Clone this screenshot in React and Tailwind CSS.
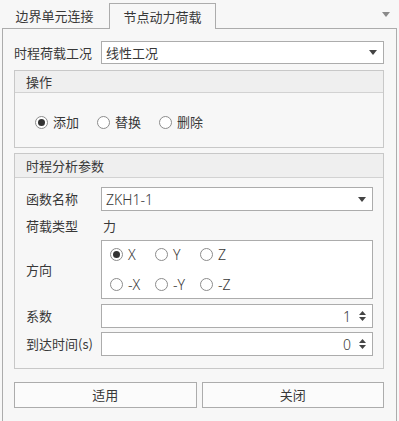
import React, { useState } from "react";

const font = { fontFamily: '"Noto Sans CJK SC", "Noto Sans", sans-serif' };
const latin = { fontFamily: '"Noto Sans", "Noto Sans CJK SC", sans-serif' };

function Caret({ color = "#444", className = "" }) {
  return (
    <svg width="8" height="5" viewBox="0 0 8 5" className={className}>
      <path d="M0 0 H8 L4 5 Z" fill={color} />
    </svg>
  );
}

function Radio({ checked, label, onClick, className = "", labelStyle }) {
  return (
    <button type="button" onClick={onClick} className={"flex items-center gap-[5px] " + className}>
      <span className="flex items-center justify-center w-[13px] h-[13px] rounded-full border border-[#8c8c8c] bg-white">
        {checked && <span className="w-[7px] h-[7px] rounded-full bg-[#333]" />}
      </span>
      <span style={labelStyle}>{label}</span>
    </button>
  );
}

function Spin({ value }) {
  return (
    <div className="flex-1 h-[24px] border border-[#acacac] bg-white flex items-center justify-end pr-[6px]">
      <span style={latin} className="mr-[8px] text-[14px] font-light">{value}</span>
      <div className="flex flex-col gap-[2px]">
        <svg width="7" height="4" viewBox="0 0 7 4"><path d="M0 4 H7 L3.5 0 Z" fill="#444" /></svg>
        <svg width="7" height="4" viewBox="0 0 7 4"><path d="M0 0 H7 L3.5 4 Z" fill="#444" /></svg>
      </div>
    </div>
  );
}

export default function App() {
  const [op, setOp] = useState("add");
  const [dir, setDir] = useState("X");

  return (
    <div style={font} className="w-[399px] h-[421px] bg-[#f7f7f7] text-[13px] text-[#383838] overflow-hidden">
      {/* 标签栏 */}
      <div className="flex items-end h-[28px]">
        <div className="w-[109px] h-[25px] flex items-center justify-center">边界单元连接</div>
        <div className="w-[107px] h-[26px] border border-b-0 border-[#acacac] bg-[#f7f7f7] flex items-center justify-center -mb-px relative z-10">
          节点动力荷载
        </div>
        <div className="flex-1 h-[28px] flex items-center justify-end pr-[9px]">
          <Caret color="#8a8a8a" />
        </div>
      </div>

      {/* 面板 */}
      <div className="ml-[2px] w-[395px] h-[393px] border border-b-0 border-[#acacac] pt-[12px] pl-[11px] pr-[12px]">
        <div className="flex items-center h-[23px]">
          <div className="w-[87px] whitespace-nowrap">时程荷载工况</div>
          <div className="flex-1 h-[23px] border border-[#acacac] bg-white flex items-center justify-between pl-[4px] pr-[6px]">
            <span>线性工况</span>
            <Caret />
          </div>
        </div>

        {/* 操作 */}
        <div className="mt-[6px] border border-[#c8c8c8] h-[78px]">
          <div className="h-[22px] bg-[#efefef] border-b border-[#d2d2d2] flex items-center pl-[11px]">操作</div>
          <div className="flex items-center gap-[18px] pl-[20px] h-[54px] pt-[4px]">
            <Radio checked={op === "add"} label="添加" onClick={() => setOp("add")} />
            <Radio checked={op === "rep"} label="替换" onClick={() => setOp("rep")} />
            <Radio checked={op === "del"} label="删除" onClick={() => setOp("del")} />
          </div>
        </div>

        {/* 时程分析参数 */}
        <div className="mt-[5px] border border-[#c8c8c8] h-[216px]">
          <div className="h-[24px] bg-[#efefef] border-b border-[#d2d2d2] flex items-center pl-[11px]">时程分析参数</div>
          <div className="pl-[11px] pr-[10px] pt-[9px]">
            <div className="flex items-center">
              <div className="w-[75px]">函数名称</div>
              <div className="flex-1 h-[24px] border border-[#acacac] bg-white flex items-center justify-between pl-[4px] pr-[6px]">
                <span style={latin} className="text-[14px] font-light">ZKH1-1</span>
                <Caret />
              </div>
            </div>
            <div className="flex items-center h-[28px] mt-[1px]">
              <div className="w-[77px]">荷载类型</div>
              <div>力</div>
            </div>
            <div className="flex items-center">
              <div className="w-[75px]">方向</div>
              <div className="flex-1 h-[59px] border border-[#acacac] bg-white pl-[8px] flex flex-col justify-center gap-[9px] text-[14px] font-light">
                <div className="flex">
                  {["X", "Y", "Z"].map((d) => (
                    <Radio key={d} className="w-[45px]" labelStyle={latin} checked={dir === d} label={d} onClick={() => setDir(d)} />
                  ))}
                </div>
                <div className="flex">
                  {["-X", "-Y", "-Z"].map((d) => (
                    <Radio key={d} className="w-[45px]" labelStyle={latin} checked={dir === d} label={d} onClick={() => setDir(d)} />
                  ))}
                </div>
              </div>
            </div>
            <div className="flex items-center mt-[5px]">
              <div className="w-[75px]">系数</div>
              <Spin value="1" />
            </div>
            <div className="flex items-center mt-[4px]">
              <div className="w-[75px] whitespace-nowrap">到达时间(s)</div>
              <Spin value="0" />
            </div>
          </div>
        </div>

        {/* 按钮 */}
        <div className="flex gap-[5px] mt-[13px]">
          <button type="button" className="flex-1 h-[26px] border border-[#acacac] bg-[#fbfbfb]">适用</button>
          <button type="button" className="flex-1 h-[26px] border border-[#acacac] bg-[#fbfbfb]">关闭</button>
        </div>
      </div>
    </div>
  );
}
